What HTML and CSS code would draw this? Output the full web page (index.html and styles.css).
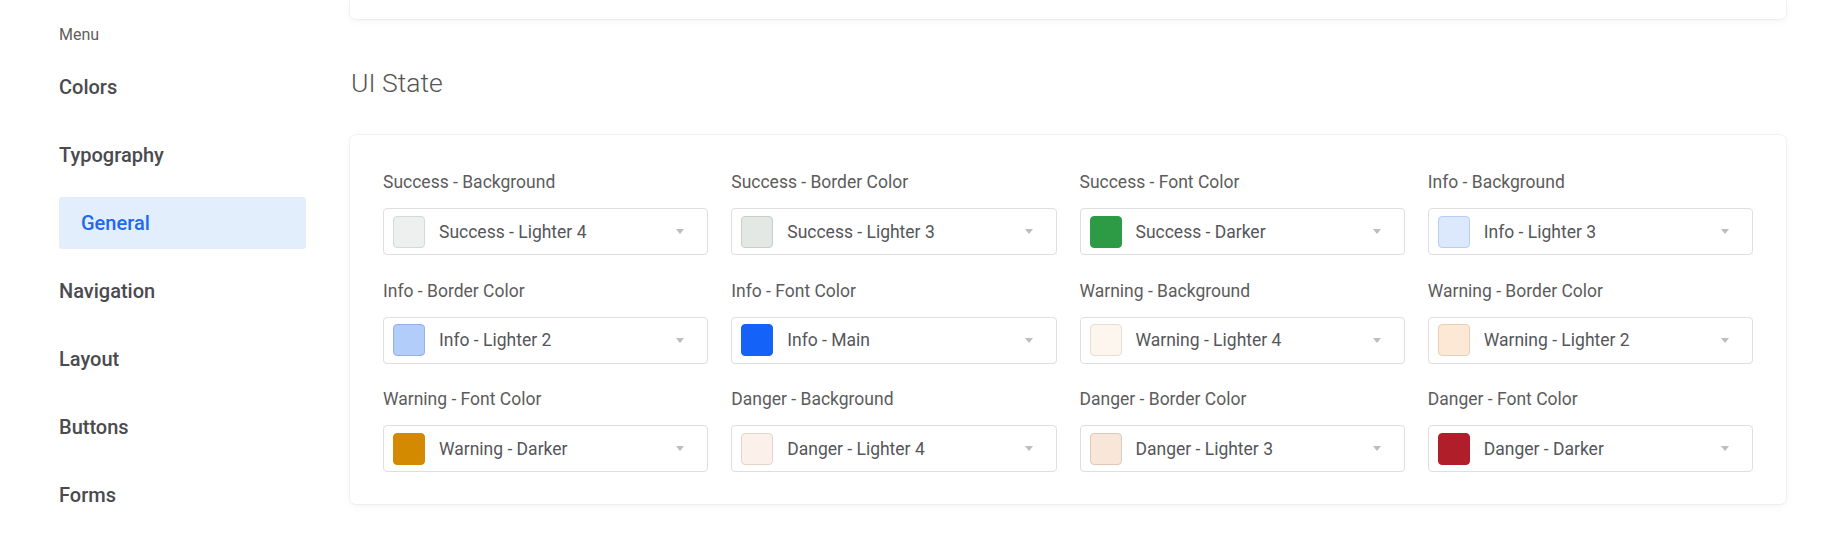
FILE: index.html
```html
<!DOCTYPE html>
<html lang="en">
<head>
<meta charset="utf-8">
<title>UI State</title>
<link rel="stylesheet" href="styles.css">
</head>
<body>
<aside class="sidebar">
  <div class="menu-title">Menu</div>
  <nav class="nav">
    <a class="nav-item">Colors</a>
    <a class="nav-item">Typography</a>
    <a class="nav-item nav-sub active">General</a>
    <a class="nav-item">Navigation</a>
    <a class="nav-item">Layout</a>
    <a class="nav-item">Buttons</a>
    <a class="nav-item">Forms</a>
  </nav>
</aside>
<main class="main">
  <div class="card card-top"></div>
  <h2 class="section-title">UI State</h2>
  <section class="card card-fields">
    <div class="field">
      <div class="label">Success - Background</div>
      <div class="select"><span class="swatch sw-success-l4"></span><span class="value">Success - Lighter 4</span><span class="caret"></span></div>
    </div>
    <div class="field">
      <div class="label">Success - Border Color</div>
      <div class="select"><span class="swatch sw-success-l3"></span><span class="value">Success - Lighter 3</span><span class="caret"></span></div>
    </div>
    <div class="field">
      <div class="label">Success - Font Color</div>
      <div class="select"><span class="swatch sw-success-dk"></span><span class="value">Success - Darker</span><span class="caret"></span></div>
    </div>
    <div class="field">
      <div class="label">Info - Background</div>
      <div class="select"><span class="swatch sw-info-l3"></span><span class="value">Info - Lighter 3</span><span class="caret"></span></div>
    </div>
    <div class="field">
      <div class="label">Info - Border Color</div>
      <div class="select"><span class="swatch sw-info-l2"></span><span class="value">Info - Lighter 2</span><span class="caret"></span></div>
    </div>
    <div class="field">
      <div class="label">Info - Font Color</div>
      <div class="select"><span class="swatch sw-info-main"></span><span class="value">Info - Main</span><span class="caret"></span></div>
    </div>
    <div class="field">
      <div class="label">Warning - Background</div>
      <div class="select"><span class="swatch sw-warn-l4"></span><span class="value">Warning - Lighter 4</span><span class="caret"></span></div>
    </div>
    <div class="field">
      <div class="label">Warning - Border Color</div>
      <div class="select"><span class="swatch sw-warn-l2"></span><span class="value">Warning - Lighter 2</span><span class="caret"></span></div>
    </div>
    <div class="field">
      <div class="label">Warning - Font Color</div>
      <div class="select"><span class="swatch sw-warn-dk"></span><span class="value">Warning - Darker</span><span class="caret"></span></div>
    </div>
    <div class="field">
      <div class="label">Danger - Background</div>
      <div class="select"><span class="swatch sw-danger-l4"></span><span class="value">Danger - Lighter 4</span><span class="caret"></span></div>
    </div>
    <div class="field">
      <div class="label">Danger - Border Color</div>
      <div class="select"><span class="swatch sw-danger-l3"></span><span class="value">Danger - Lighter 3</span><span class="caret"></span></div>
    </div>
    <div class="field">
      <div class="label">Danger - Font Color</div>
      <div class="select"><span class="swatch sw-danger-dk"></span><span class="value">Danger - Darker</span><span class="caret"></span></div>
    </div>
  </section>
</main>
</body>
</html>
```

FILE: styles.css
```css
* { box-sizing: border-box; }

html, body {
  margin: 0;
  padding: 0;
  background: #ffffff;
  font-family: Roboto, "Liberation Sans", Arial, sans-serif;
}

body {
  display: flex;
  width: 1840px;
  height: 536px;
  overflow: hidden;
}

/* Sidebar */
.sidebar {
  width: 350px;
  flex: 0 0 350px;
  padding: 25px 0 0 59px;
}

.menu-title {
  font-size: 16px;
  line-height: 20px;
  color: #5e5e5e;
  margin-bottom: 16px;
}

.nav {
  display: flex;
  flex-direction: column;
  gap: 16px;
  width: 247px;
}

.nav-item {
  display: block;
  height: 52px;
  line-height: 52px;
  font-size: 20px;
  font-weight: 500;
  color: #4a4a4f;
  border-radius: 3px;
}

.nav-sub {
  padding-left: 22px;
}

.nav-item.active {
  background: #e3eefc;
  color: #1f68f2;
}

/* Main */
.main {
  width: 1436px;
  flex: 0 0 1436px;
  display: flex;
  flex-direction: column;
}

.card {
  background: #ffffff;
  border-radius: 6px;
  box-shadow: 0 0 0 1px rgba(0, 0, 0, 0.035), 0 2px 8px rgba(0, 0, 0, 0.05);
}

.card-top {
  height: 19px;
  border-radius: 0 0 6px 6px;
}

.section-title {
  margin: 49px 0 0 1px;
  font-size: 26.5px;
  line-height: 30px;
  font-weight: 300;
  color: #555555;
}

.card-fields {
  margin-top: 37px;
  padding: 37px 33px 32px 33px;
  display: grid;
  grid-template-columns: repeat(4, 1fr);
  column-gap: 23px;
  row-gap: 25.5px;
}

.label {
  font-size: 17.5px;
  line-height: 20px;
  color: #5c5c5c;
  margin-bottom: 16px;
  white-space: nowrap;
}

.select {
  height: 47px;
  border: 1px solid #dedede;
  border-radius: 4px;
  display: flex;
  align-items: center;
  padding: 0 23px 0 9px;
}

.swatch {
  width: 32px;
  height: 32px;
  flex: 0 0 32px;
  border-radius: 4px;
  border: 1px solid rgba(0, 0, 0, 0.12);
}

.value {
  flex: 1;
  margin-left: 14px;
  font-size: 17.5px;
  color: #55565a;
  white-space: nowrap;
}

.caret {
  width: 0;
  height: 0;
  border-left: 4.5px solid transparent;
  border-right: 4.5px solid transparent;
  border-top: 5px solid #bdbdbd;
}

/* Swatch colours */
.sw-success-l4 { background: #eef0ef; border-color: #d6dad7; }
.sw-success-l3 { background: #e3e8e5; border-color: #c8cec9; }
.sw-success-dk { background: #2d9b45; border-color: #2d9b45; }
.sw-info-l3    { background: #dce8fb; border-color: #b8cdf1; }
.sw-info-l2    { background: #b3cdfb; border-color: #92b1ef; }
.sw-info-main  { background: #1462f7; border-color: #1462f7; }
.sw-warn-l4    { background: #fdf6ef; border-color: #e8ddd1; }
.sw-warn-l2    { background: #fce8d5; border-color: #e7cfb7; }
.sw-warn-dk    { background: #d38a00; border-color: #d38a00; }
.sw-danger-l4  { background: #fbf1ea; border-color: #e4d5cb; }
.sw-danger-l3  { background: #f8e6d9; border-color: #dfc8b7; }
.sw-danger-dk  { background: #b01e2a; border-color: #b01e2a; }
```
